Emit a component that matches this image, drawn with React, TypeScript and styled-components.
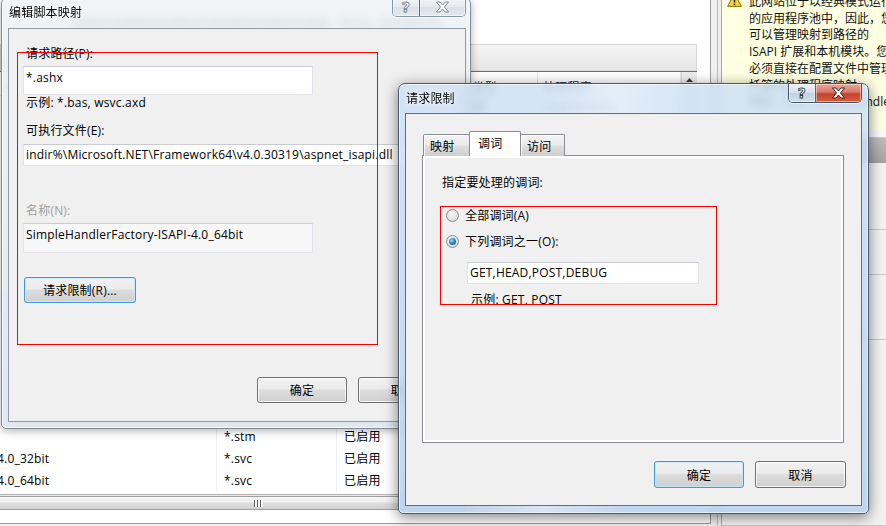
import React from 'react';
import styled, { createGlobalStyle, css } from 'styled-components';

const FONT = `"Open Sans", "Noto Sans CJK SC", "Noto Sans", sans-serif`;

const GlobalStyle = createGlobalStyle`
  *, *::before, *::after { box-sizing: border-box; }
  html, body { margin: 0; padding: 0; }
  body {
    width: 886px;
    height: 526px;
    overflow: hidden;
    background: #f0f0f0;
    font-family: ${FONT};
    font-size: 12px;
    letter-spacing: 0.2px;
    color: #000;
  }
`;

const Desktop = styled.div`
  position: relative;
  width: 886px;
  height: 526px;
  overflow: hidden;
  background: #f0f0f0;
`;

/* ---------------- IIS manager (background) ---------------- */

const Manager = styled.div`
  display: grid;
  grid-template-columns: 711px 11px 164px;
  height: 526px;
`;

const CenterPane = styled.div`
  display: flex;
  flex-direction: column;
  height: 524px;
  background: #fff;
  border-right: 1px solid #9a9a9a;
  border-bottom: 1px solid #9a9a9a;
  min-width: 0;
`;

const FeatureHeader = styled.div`
  height: 44px;
  padding: 15px 0 0 72px;
  line-height: 18px;
  color: #222;
  white-space: nowrap;
  overflow: hidden;
`;

const FilterBar = styled.div`
  width: 697px;
  height: 27px;
  border: 1px solid #d6d6d6;
  background: linear-gradient(#f5f5f5, #e6e6e6);
`;

const ListView = styled.div`
  width: 697px;
  flex: 1;
  display: flex;
  flex-direction: column;
  border-top: 1px solid #6c6d80;
  min-height: 0;
`;

const COLS = '217px 120px 106px 95px 143px';

const ListHeader = styled.div`
  display: grid;
  grid-template-columns: ${COLS} 16px;
  height: 24px;
  border-bottom: 1px solid #e2e2e2;
  background: #fff;
`;

const HeaderCell = styled.div`
  padding: 6px 0 0 5px;
  line-height: 20px;
  color: #1e2a3a;
  border-right: 1px solid #e3e6ea;
  white-space: nowrap;
  overflow: hidden;
`;

const HeaderScroll = styled.div`
  display: flex;
  justify-content: center;
  padding-top: 6px;
  background: #ececec;
  border-left: 1px solid #d9d9d9;
`;

const ListBody = styled.div`
  flex: 1;
  display: flex;
  min-height: 0;
`;

const RowStack = styled.div`
  width: 681px;
  display: flex;
  flex-direction: column;
  justify-content: space-between;
  padding-bottom: 2px;
`;

const RowGroup = styled.div`
  display: flex;
  flex-direction: column;
`;

const Row = styled.div`
  display: grid;
  grid-template-columns: ${COLS};
  height: 22px;
`;

const Cell = styled.div<{ $cut?: boolean }>`
  padding-left: ${p => (p.$cut ? 0 : 7)}px;
  text-indent: ${p => (p.$cut ? -3 : 0)}px;
  line-height: 22px;
  white-space: nowrap;
  overflow: hidden;
  border-right: 1px solid #edf1f6;
`;

const VScrollTrack = styled.div`
  width: 16px;
  background: linear-gradient(to right, #e8e8e8, #f2f2f2);
  border-left: 1px solid #dedede;
`;

const HScroll = styled.div`
  height: 16px;
  border-top: 1px solid #b4b4b4;
  background: linear-gradient(#eaeaea, #f2f2f2);
  overflow: hidden;
  padding-top: 1px;
`;

const HThumb = styled.div`
  margin-left: -6px;
  width: 528px;
  height: 14px;
  border: 1px solid #9d9d9d;
  border-radius: 3px;
  background: linear-gradient(#f7f7f7, #ececec 50%, #dcdcdc 50%, #d2d2d2);
  display: flex;
  align-items: center;
  justify-content: center;
`;

const Grip = styled.div`
  width: 9px;
  height: 7px;
  background: repeating-linear-gradient(
    to right,
    #5d5d5d 0,
    #5d5d5d 1px,
    #f6f6f6 1px,
    #f6f6f6 3px
  );
`;

const StatusStrip = styled.div`
  height: 13px;
  background: #fff;
`;

const Splitter = styled.div`
  background: linear-gradient(
    to right,
    #f0f0f0 6px,
    #b9b9b9 6px,
    #b9b9b9 7px,
    #f0f0f0 7px,
    #f0f0f0 10px,
    #a8a8a8 10px
  );
`;

const ActionsPane = styled.div`
  display: flex;
  flex-direction: column;
  background: #f0f0f0;
  min-width: 0;
`;

const Notice = styled.div`
  height: 130px;
  display: flex;
  padding-left: 5px;
  background: #ffffe1;
  overflow: hidden;
`;

const NoticeIcon = styled.svg`
  flex: none;
  margin-top: -7px;
`;

const NoticeText = styled.div`
  margin: -6px 0 0 7px;
  line-height: 16.7px;
  letter-spacing: 0;
  color: #111;
`;

const NoticeLine = styled.div`
  white-space: nowrap;
`;

const PaneGap = styled.div`
  height: 7px;
  background: #fafafa;
`;

const ActionsHeader = styled.div`
  height: 26px;
  background: linear-gradient(#bdbdbd, #a2a2a2);
  border-top: 1px solid #c9c9c9;
`;

const ActionGroup = styled.div<{ $h?: number }>`
  height: ${p => (p.$h ? `${p.$h}px` : 'auto')};
  flex: ${p => (p.$h ? 'none' : 1)};
  border-bottom: 1px solid #c6c6c6;
  background: #f2f2f2;
`;

/* ---------------- Windows 7 dialog chrome ---------------- */

const Window = styled.section<{
  $x: number;
  $y: number;
  $w: number;
  $h: number;
  $frame: string;
  $active?: boolean;
}>`
  position: absolute;
  left: ${p => p.$x}px;
  top: ${p => p.$y}px;
  width: ${p => p.$w}px;
  height: ${p => p.$h}px;
  display: flex;
  flex-direction: column;
  padding: ${p => p.$frame};
  border: 1px solid ${p => (p.$active ? '#4a5c70' : '#7d8b99')};
  border-radius: 7px 7px 5px 5px;
  backdrop-filter: blur(4px);
  ${p =>
    p.$active
      ? css`
          background: linear-gradient(
              100deg,
              rgba(255, 255, 255, 0) 25%,
              rgba(255, 255, 255, 0.35) 40%,
              rgba(255, 255, 255, 0) 55%
            ),
            linear-gradient(180deg, rgba(206, 224, 244, 0.84), rgba(184, 210, 238, 0.86));
          box-shadow: inset 0 0 0 1px rgba(255, 255, 255, 0.55), 0 3px 14px rgba(0, 0, 0, 0.5);
        `
      : css`
          background: linear-gradient(180deg, rgba(238, 242, 246, 0.86), rgba(222, 229, 236, 0.9));
          box-shadow: inset 0 0 0 1px rgba(255, 255, 255, 0.6), 0 2px 8px rgba(0, 0, 0, 0.3);
        `}
`;

const TitleBar = styled.header<{ $h: number }>`
  height: ${p => p.$h}px;
  flex: none;
  display: flex;
  justify-content: space-between;
`;

const TitleText = styled.div`
  align-self: center;
  padding-left: 1px;
  line-height: 16px;
  color: #000;
  text-shadow: 0 0 6px rgba(255, 255, 255, 0.95), 0 0 2px rgba(255, 255, 255, 0.9);
`;

const CaptionGroup = styled.div<{ $active?: boolean }>`
  align-self: flex-start;
  display: flex;
  height: 19px;
  border: 1px solid ${p => (p.$active ? '#46566b' : '#8796a6')};
  border-top: none;
  border-radius: 0 0 5px 5px;
  overflow: hidden;
  box-shadow: 0 1px 0 rgba(255, 255, 255, 0.6);
`;

const CaptionButton = styled.div<{ $kind: 'help' | 'close'; $active?: boolean }>`
  width: ${p => (p.$kind === 'close' ? 46 : 26)}px;
  display: flex;
  align-items: center;
  justify-content: center;
  box-shadow: inset 0 0 0 1px rgba(255, 255, 255, 0.45);
  ${p =>
    p.$kind === 'close' && p.$active
      ? css`
          background: linear-gradient(#eaa898 0%, #d9786a 45%, #c4432c 55%, #d4603f 100%);
        `
      : p.$active
      ? css`
          background: linear-gradient(
            rgba(238, 243, 248, 0.9),
            rgba(214, 224, 236, 0.85) 50%,
            rgba(192, 206, 224, 0.85) 50%,
            rgba(208, 222, 238, 0.9)
          );
        `
      : css`
          background: linear-gradient(#f3f6f8, #e4e9ee 50%, #d9e0e7 50%, #e3e9ef);
        `}
  & + & {
    border-left: 1px solid ${p => (p.$active ? '#56667a' : '#95a2b0')};
  }
`;

const HelpMark = styled.span<{ $active?: boolean }>`
  font-family: "DejaVu Sans", sans-serif;
  font-weight: bold;
  font-size: 14px;
  line-height: 14px;
  color: #fff;
  -webkit-text-stroke: 0.9px ${p => (p.$active ? '#2c3642' : '#7b8794')};
`;

const Client = styled.div<{ $active?: boolean; $pad: string }>`
  flex: 1;
  min-height: 0;
  display: flex;
  flex-direction: column;
  padding: ${p => p.$pad};
  background: #f0f0f0;
  border: 1px solid ${p => (p.$active ? '#5d6f84' : '#8d99a6')};
`;

/* ---------------- common controls ---------------- */

const FieldLabel = styled.div<{ $gap?: number; $disabled?: boolean }>`
  margin-top: ${p => p.$gap ?? 0}px;
  padding-left: 3px;
  line-height: 18px;
  color: ${p => (p.$disabled ? '#a0a0a0' : '#000')};
  white-space: nowrap;
`;

const TextBox = styled.div<{
  $w: number;
  $h: number;
  $gap?: number;
  $indent?: number;
  $readOnly?: boolean;
}>`
  width: ${p => p.$w}px;
  height: ${p => p.$h}px;
  flex: none;
  margin-top: ${p => p.$gap ?? 0}px;
  margin-left: ${p => p.$indent ?? 0}px;
  padding: ${p => (p.$h > 24 ? 3 : 2)}px 0 0 2px;
  line-height: 16px;
  white-space: nowrap;
  overflow: hidden;
  background: ${p => (p.$readOnly ? '#f7f7f7' : '#fff')};
  border: 1px solid #e2e3ea;
  border-top-color: #c9cbd2;
`;

const PushButton = styled.div<{ $w: number; $h: number; $default?: boolean; $gap?: number; $indent?: number }>`
  width: ${p => p.$w}px;
  height: ${p => p.$h}px;
  flex: none;
  margin-top: ${p => p.$gap ?? 0}px;
  margin-left: ${p => p.$indent ?? 0}px;
  display: flex;
  align-items: center;
  justify-content: center;
  border-radius: 3px;
  border: 1px solid ${p => (p.$default ? '#3c9bd8' : '#707070')};
  background: linear-gradient(#f2f2f2, #ebebeb 45%, #dddddd 50%, #cfcfcf);
  box-shadow: inset 0 0 0 1px ${p => (p.$default ? 'rgba(196, 232, 252, 0.9)' : 'rgba(252, 252, 252, 0.85)')};
  white-space: nowrap;
`;

const Footer = styled.div`
  margin-top: auto;
  display: flex;
  justify-content: flex-end;
  gap: 11px;
`;

/* ---------------- tab control ---------------- */

const TabStrip = styled.div`
  display: flex;
  align-items: flex-end;
  height: 25px;
  margin-left: 1px;
  position: relative;
  z-index: 1;
`;

const Tab = styled.div<{ $w: number; $selected?: boolean }>`
  width: ${p => p.$w}px;
  height: ${p => (p.$selected ? 25 : 22)}px;
  padding-left: ${p => (p.$selected ? 8 : 6)}px;
  display: flex;
  align-items: center;
  border: 1px solid #898c95;
  border-bottom: none;
  border-radius: 2px 2px 0 0;
  background: ${p =>
    p.$selected ? '#fff' : 'linear-gradient(#f3f3f3, #ebebeb 45%, #dddddd 55%, #cfcfcf)'};
  ${p =>
    p.$selected
      ? css`
          padding-bottom: 2px;
        `
      : css`
          box-shadow: inset 1px 1px 0 rgba(255, 255, 255, 0.8);
        `}
  & + & {
    margin-left: -1px;
  }
`;

const TabPanel = styled.div`
  width: 422px;
  height: 288px;
  margin-top: -1px;
  padding: 18px 0 0 19px;
  border: 1px solid #898c95;
  background: #f0f0f0;
  box-shadow: inset 0 0 0 2px #fff;
  display: flex;
  flex-direction: column;
`;

const PanelCaption = styled.div`
  line-height: 18px;
`;

const RadioRow = styled.label<{ $gap: number }>`
  margin-top: ${p => p.$gap}px;
  height: 18px;
  padding-left: 4px;
  display: flex;
  align-items: center;
  gap: 6px;
`;

const RadioDot = styled.span<{ $checked?: boolean }>`
  position: relative;
  flex: none;
  width: 13px;
  height: 13px;
  border-radius: 50%;
  border: 1px solid #8b8c8d;
  background: radial-gradient(circle at 45% 40%, #f6f6f6 0%, #e3e3e3 55%, #c9c9c9 100%);
  ${p =>
    p.$checked &&
    css`
      &::after {
        content: '';
        position: absolute;
        left: 2px;
        top: 2px;
        width: 7px;
        height: 7px;
        border-radius: 50%;
        background: radial-gradient(circle at 40% 35%, #9bdcff 0%, #2b8ad0 45%, #123f6e 100%);
      }
    `}
`;

const ClippedHint = styled.div<{ $indent: number; $gap: number }>`
  margin: ${p => p.$gap}px 0 0 ${p => p.$indent}px;
  height: 13px;
  overflow: hidden;
  line-height: 18px;
  white-space: nowrap;
`;

const Annotation = styled.div<{ $x: number; $y: number; $w: number; $h: number }>`
  position: absolute;
  left: ${p => p.$x}px;
  top: ${p => p.$y}px;
  width: ${p => p.$w}px;
  height: ${p => p.$h}px;
  border: 1px solid #ff0000;
  pointer-events: none;
`;

/* ---------------- icons ---------------- */

const CloseGlyph = ({ active }: { active?: boolean }) => (
  <svg width="15" height="12" viewBox="0 0 15 12">
    <polygon
      points="1.5,1 5,1 7.5,4 10,1 13.5,1 9.5,6 13.5,11 10,11 7.5,8 5,11 1.5,11 5.5,6"
      fill="#fff"
      stroke={active ? '#3a2420' : '#7b8794'}
      strokeWidth="1"
      strokeLinejoin="round"
    />
  </svg>
);

const Caption = ({ active }: { active?: boolean }) => (
  <CaptionGroup $active={active}>
    <CaptionButton $kind="help" $active={active}>
      <HelpMark $active={active}>?</HelpMark>
    </CaptionButton>
    <CaptionButton $kind="close" $active={active}>
      <CloseGlyph active={active} />
    </CaptionButton>
  </CaptionGroup>
);

const UpArrow = () => (
  <svg width="7" height="4" viewBox="0 0 7 4">
    <polygon points="0,4 3.5,0 7,4" fill="#3a3a3a" />
  </svg>
);

const WarningIcon = () => (
  <NoticeIcon width="15" height="14" viewBox="0 0 15 14">
    <path d="M7.5 0.6 L14.4 13.4 H0.6 Z" fill="#f6d33c" stroke="#8c6d05" strokeWidth="1" strokeLinejoin="round" />
    <rect x="6.75" y="4.2" width="1.5" height="5.3" fill="#1c1c1c" />
    <rect x="6.75" y="10.6" width="1.5" height="1.5" fill="#1c1c1c" />
  </NoticeIcon>
);

/* ---------------- data ---------------- */

const headerCols = ['名称', '路径', '状态', '路径类型', '处理程序'];

type Mapping = { name: string; path: string; state: string; type: string; handler: string; cut?: boolean };

const topRows: Mapping[] = [
  { name: '', path: '', state: '', type: '未指定', handler: 'IsapiModule' },
];

const bottomRows: Mapping[] = [
  { name: '', path: '*.stm', state: '已启用', type: '文件', handler: 'ServerSideIncludeModule' },
  { name: '4.0_32bit', path: '*.svc', state: '已启用', type: '未指定', handler: 'IsapiModule', cut: true },
  { name: '4.0_64bit', path: '*.svc', state: '已启用', type: '未指定', handler: 'IsapiModule', cut: true },
];

const noticeLines = [
  '此网站位于以经典模式运行',
  '的应用程序池中，因此，您',
  '可以管理映射到路径的',
  'ISAPI 扩展和本机模块。您',
  '必须直接在配置文件中管理',
  '托管的处理程序映射。',
  '映射，例如 SimpleHandlerFactory',
];

const MappingRow = ({ r }: { r: Mapping }) => (
  <Row>
    <Cell $cut={r.cut}>{r.name}</Cell>
    <Cell>{r.path}</Cell>
    <Cell>{r.state}</Cell>
    <Cell>{r.type}</Cell>
    <Cell>{r.handler}</Cell>
  </Row>
);

export default function App() {
  return (
    <>
      <GlobalStyle />
      <Desktop>
        <Manager>
          <CenterPane>
            <FeatureHeader>使用此功能指定处理特定请求类型的响应的资源，如 DLL 和托管代码。</FeatureHeader>
            <FilterBar />
            <ListView>
              <ListHeader>
                {headerCols.map(c => (
                  <HeaderCell key={c}>{c}</HeaderCell>
                ))}
                <HeaderScroll>
                  <UpArrow />
                </HeaderScroll>
              </ListHeader>
              <ListBody>
                <RowStack>
                  <RowGroup>
                    {topRows.map((r, i) => (
                      <MappingRow key={i} r={r} />
                    ))}
                  </RowGroup>
                  <RowGroup>
                    {bottomRows.map((r, i) => (
                      <MappingRow key={i} r={r} />
                    ))}
                  </RowGroup>
                </RowStack>
                <VScrollTrack />
              </ListBody>
              <HScroll>
                <HThumb>
                  <Grip />
                </HThumb>
              </HScroll>
            </ListView>
            <StatusStrip />
          </CenterPane>
          <Splitter />
          <ActionsPane>
            <Notice>
              <WarningIcon />
              <NoticeText>
                {noticeLines.map(l => (
                  <NoticeLine key={l}>{l}</NoticeLine>
                ))}
              </NoticeText>
            </Notice>
            <PaneGap />
            <ActionsHeader />
            <ActionGroup $h={67} />
            <ActionGroup $h={45} />
            <ActionGroup $h={65} />
            <ActionGroup />
          </ActionsPane>
        </Manager>

        {/* 编辑脚本映射 (inactive) */}
        <Window $x={1} $y={-3} $w={470} $h={432} $frame="0 4px 6px 6px">
          <TitleBar $h={30}>
            <TitleText>编辑脚本映射</TitleText>
            <Caption />
          </TitleBar>
          <Client $pad="16px 17px 18px 14px">
            <FieldLabel>请求路径(P):</FieldLabel>
            <TextBox $w={290} $h={29} $gap={3}>*.ashx</TextBox>
            <FieldLabel $gap={-1}>示例: *.bas, wsvc.axd</FieldLabel>
            <FieldLabel $gap={10}>可执行文件(E):</FieldLabel>
            <TextBox $w={425} $h={22} $gap={4}>
              indir%\Microsoft.NET\Framework64\v4.0.30319\aspnet_isapi.dll
            </TextBox>
            <FieldLabel $gap={36} $disabled>
              名称(N):
            </FieldLabel>
            <TextBox $w={290} $h={30} $gap={3} $readOnly>
              SimpleHandlerFactory-ISAPI-4.0_64bit
            </TextBox>
            <PushButton $w={112} $h={26} $gap={24} $indent={1} $default>
              请求限制(R)...
            </PushButton>
            <Footer>
              <PushButton $w={90} $h={26}>确定</PushButton>
              <PushButton $w={90} $h={26}>取消</PushButton>
            </Footer>
          </Client>
        </Window>

        {/* 请求限制 (active) */}
        <Window $x={398} $y={83} $w={471} $h={431} $frame="0 6px 7px 6px" $active>
          <TitleBar $h={29}>
            <TitleText>请求限制</TitleText>
            <Caption active />
          </TitleBar>
          <Client $active $pad="17px 15px 17px 16px">
            <TabStrip>
              <Tab $w={47}>映射</Tab>
              <Tab $w={52} $selected>
                调词
              </Tab>
              <Tab $w={45}>访问</Tab>
            </TabStrip>
            <TabPanel>
              <PanelCaption>指定要处理的调词:</PanelCaption>
              <RadioRow $gap={14}>
                <RadioDot />
                全部调词(A)
              </RadioRow>
              <RadioRow $gap={8}>
                <RadioDot $checked />
                下列调词之一(O):
              </RadioRow>
              <TextBox $w={232} $h={22} $gap={12} $indent={25}>
                GET,HEAD,POST,DEBUG
              </TextBox>
              <ClippedHint $indent={29} $gap={7}>
                示例: GET, POST
              </ClippedHint>
            </TabPanel>
            <Footer>
              <PushButton $w={90} $h={27} $default>
                确定
              </PushButton>
              <PushButton $w={91} $h={27}>取消</PushButton>
            </Footer>
          </Client>
        </Window>

        <Annotation $x={17} $y={52} $w={361} $h={293} />
        <Annotation $x={440} $y={206} $w={277} $h={99} />
      </Desktop>
    </>
  );
}
